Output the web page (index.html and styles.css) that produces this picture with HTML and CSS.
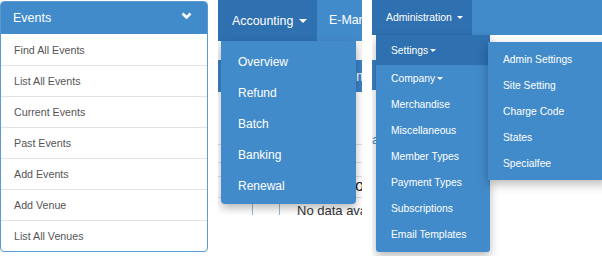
FILE: index.html
```html
<!DOCTYPE html>
<html lang="en">
<head>
    <meta charset="UTF-8">
    <title>Menus</title>
    <link rel="stylesheet" href="styles.css">
</head>
<body>
    <div class="shots">
        <!-- sidebar panel -->
        <div class="panel">
            <div class="panel-head">
                <span>Events</span>
                <svg class="chev" width="11" height="8" viewBox="0 0 11 8"><path d="M1.5 1.5 L5.5 5.5 L9.5 1.5" fill="none" stroke="#fff" stroke-width="2.6"/></svg>
            </div>
            <div class="panel-item">Find All Events</div>
            <div class="panel-item">List All Events</div>
            <div class="panel-item">Current Events</div>
            <div class="panel-item">Past Events</div>
            <div class="panel-item">Add Events</div>
            <div class="panel-item">Add Venue</div>
            <div class="panel-item">List All Venues</div>
        </div>

        <!-- accounting menu -->
        <div class="shot shot-acc">
            <div class="navbar nav-acc">
                <div class="tab tab-acc">Accounting <span class="caret"></span></div>
                <div class="tab-plain">E-Marketing</div>
            </div>
            <div class="page">
                <div class="page-gap"></div>
                <div class="page-bar">m</div>
                <div class="page-row r1"></div>
                <div class="page-row r2"></div>
                <div class="page-row r3"></div>
                <div class="page-row big">o</div>
                <div class="page-cells">
                    <span class="cell"></span><span class="cell"></span><span class="cell-text">No data available</span>
                </div>
            </div>
            <div class="dropdown dd-acc">
                <div class="dd-item">Overview</div>
                <div class="dd-item">Refund</div>
                <div class="dd-item">Batch</div>
                <div class="dd-item">Banking</div>
                <div class="dd-item">Renewal</div>
            </div>
        </div>

        <!-- administration menu -->
        <div class="shot shot-adm">
            <div class="navbar nav-adm">
                <div class="tab tab-adm">Administration <span class="caret"></span></div>
            </div>
            <div class="page page-adm">
                <div class="adm-strip"></div>
                <div class="adm-bar"></div>
                <div class="adm-letter">a</div>
            </div>
            <div class="dropdown dd-adm">
                <div class="dd-item active">Settings <span class="caret small"></span></div>
                <div class="dd-item">Company <span class="caret small"></span></div>
                <div class="dd-item">Merchandise</div>
                <div class="dd-item">Miscellaneous</div>
                <div class="dd-item">Member Types</div>
                <div class="dd-item">Payment Types</div>
                <div class="dd-item">Subscriptions</div>
                <div class="dd-item">Email Templates</div>
            </div>
            <div class="dropdown dd-sub">
                <div class="dd-item">Admin Settings</div>
                <div class="dd-item">Site Setting</div>
                <div class="dd-item">Charge Code</div>
                <div class="dd-item">States</div>
                <div class="dd-item">Specialfee</div>
            </div>
        </div>
    </div>
</body>
</html>
```

FILE: styles.css
```css
body {
    margin: 0;
    background: #fff;
    font-family: "Liberation Sans", Arial, sans-serif;
}
.shots {
    display: flex;
    align-items: flex-start;
    width: 602px;
    height: 263px;
    overflow: hidden;
}

/* panel */
.panel {
    width: 206px;
    margin-top: 1px;
    border: 1px solid #5d9ad3;
    border-radius: 4px;
    overflow: hidden;
    flex-shrink: 0;
}
.panel-head {
    height: 32px;
    background: #428bca;
    color: #fff;
    font-size: 12.5px;
    padding: 0 12px;
    display: flex;
    align-items: center;
    justify-content: space-between;
}
.chev {
    margin-right: 3px;
    margin-top: -4px;
}
.panel-item {
    height: 30px;
    border-top: 1px solid #e3e3e3;
    padding-left: 13px;
    font-size: 10.7px;
    color: #555;
    display: flex;
    align-items: center;
}
.panel-head + .panel-item {
    border-top: none;
    height: 31px;
}

/* screenshots with navbars */
.shot {
    position: relative;
    flex-shrink: 0;
    overflow: hidden;
}
.shot-acc {
    width: 144px;
    height: 215px;
    margin-left: 10px;
}
.shot-adm {
    width: 230px;
    height: 256px;
    margin-left: 10px;
}
.navbar {
    background: #428bca;
    display: flex;
    color: #fff;
    white-space: nowrap;
}
.nav-acc {
    height: 41px;
    font-size: 12.4px;
}
.nav-adm {
    height: 35px;
    font-size: 10.4px;
}
.tab {
    background: #2f70b0;
    display: flex;
    align-items: center;
    flex-shrink: 0;
    box-sizing: border-box;
}
.tab-acc {
    width: 99px;
    padding-left: 14px;
}
.tab-adm {
    width: 100px;
    padding-left: 14px;
}
.tab-plain {
    flex: 1;
    min-width: 0;
    overflow: hidden;
    line-height: 41px;
    padding-left: 12px;
}
.caret {
    display: inline-block;
    width: 0;
    height: 0;
    margin-left: 6px;
    border-top: 4px solid #fff;
    border-left: 4px solid transparent;
    border-right: 4px solid transparent;
}
.nav-adm .caret {
    margin-left: 5px;
    border-top-width: 3.5px;
    border-left-width: 3.5px;
    border-right-width: 3.5px;
}
.caret.small {
    margin-left: 2px;
    border-top-width: 3px;
    border-left-width: 3.5px;
    border-right-width: 3.5px;
}

/* background page behind menus */
.page {
    background: #f7f7f7;
    height: 174px;
}
.page-gap {
    height: 19px;
}
.page-bar {
    height: 32px;
    background: #3b82c2;
    color: #fff;
    font-size: 14px;
    padding-left: 138px;
    line-height: 32px;
}
.page-row {
    border-bottom: 1px solid #ddd;
    background: #fff;
}
.r1 { height: 52px; }
.r2 { height: 17px; }
.r3 { height: 13px; }
.page-row.big {
    height: 20px;
    font-size: 16px;
    color: #222;
    padding-left: 137px;
    line-height: 18px;
}
.page-cells {
    display: flex;
    height: 18px;
    background: #fff;
}
.cell {
    width: 26px;
    flex-shrink: 0;
    border-right: 1px solid #9ab9d8;
}
.cell:first-child {
    width: 34px;
}
.cell-text {
    flex: 1;
    min-width: 0;
    overflow: hidden;
    padding-left: 17px;
    font-size: 13px;
    color: #333;
    line-height: 26px;
    white-space: nowrap;
}
.page-adm {
    background: #fff;
    height: 221px;
    position: relative;
}
.adm-strip {
    height: 7px;
    background: #fff;
}
.adm-bar {
    height: 30px;
    margin-top: 18px;
    background: #3b82c2;
}
.adm-letter {
    font-size: 13px;
    color: #3b82c2;
    margin-top: 42px;
}

/* dropdowns */
.dropdown {
    position: absolute;
    background: #428bca;
    color: #fff;
    box-shadow: 0 4px 10px rgba(0, 0, 0, 0.28);
}
.dd-acc {
    top: 41px;
    left: 3px;
    width: 135px;
    padding-top: 5px;
    height: 158px;
    border-radius: 0 0 4px 4px;
    font-size: 12px;
}
.dd-acc .dd-item {
    height: 31px;
    padding-left: 17px;
    display: flex;
    align-items: center;
}
.dd-adm {
    top: 35px;
    left: 4px;
    width: 114px;
    height: 217px;
    border-radius: 0 0 3px 3px;
    font-size: 10.3px;
}
.dd-adm .dd-item {
    height: 26px;
    padding-left: 15px;
    display: flex;
    align-items: center;
    white-space: nowrap;
}
.dd-adm .dd-item.active {
    background: #2f70b0;
    height: 30px;
}
.dd-sub {
    top: 42px;
    left: 116px;
    width: 120px;
    height: 138px;
    padding-top: 4px;
    box-sizing: border-box;
    font-size: 10.3px;
}
.dd-sub .dd-item {
    height: 26px;
    padding-left: 15px;
    display: flex;
    align-items: center;
}
```
